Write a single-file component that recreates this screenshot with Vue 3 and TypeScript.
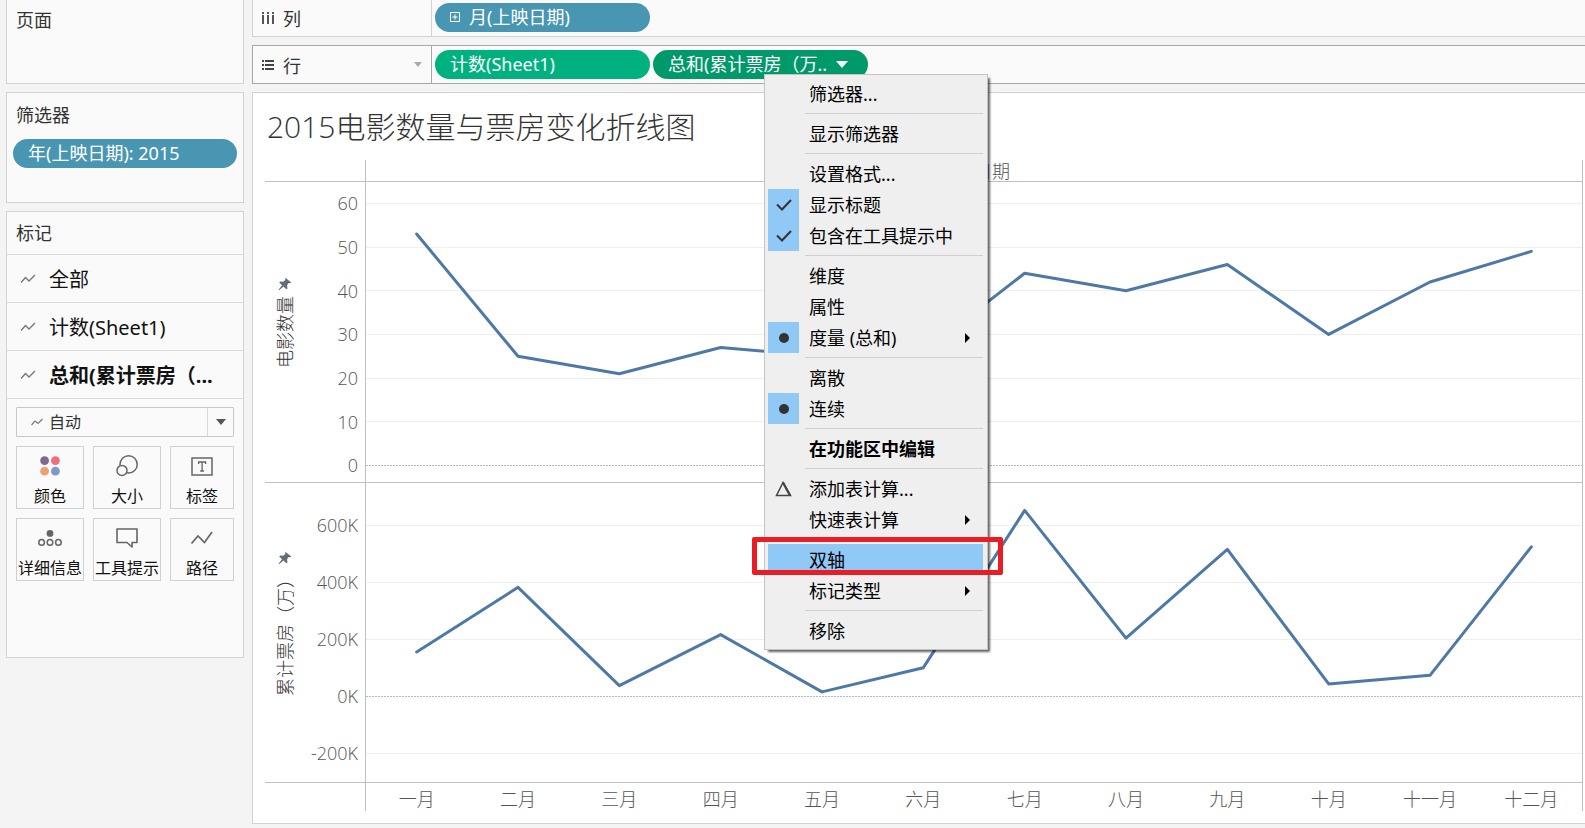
<script setup lang="ts">
interface Series {
  name: string
  min: number
  max: number
  ticks: { value: number; label: string }[]
  values: number[]
}

interface MenuEntry {
  label: string
  mark?: 'check' | 'dot' | 'delta'
  submenu?: boolean
  bold?: boolean
  active?: boolean
}

const months = ['一月', '二月', '三月', '四月', '五月', '六月', '七月', '八月', '九月', '十月', '十一月', '十二月']

const panes: Series[] = [
  {
    name: '电影数量',
    min: -3.8,
    max: 64.9,
    ticks: [60, 50, 40, 30, 20, 10, 0].map((v) => ({ value: v, label: String(v) })),
    values: [53, 25, 21, 27, 25, 26, 44, 40, 46, 30, 42, 49],
  },
  {
    name: '累计票房（万）',
    min: -300,
    max: 749,
    ticks: [600, 400, 200, 0, -200].map((v) => ({ value: v, label: `${v}K` })),
    values: [156, 383, 38, 217, 16, 101, 653, 205, 516, 44, 74, 525],
  },
]

const ratio = (p: Series, v: number) => (p.max - v) / (p.max - p.min)
const lineOf = (p: Series) =>
  p.values.map((v, i) => `${i * 100 + 50},${(ratio(p, v) * 300).toFixed(1)}`).join(' ')

const layers = [
  { label: '全部', bold: false },
  { label: '计数(Sheet1)', bold: false },
  { label: '总和(累计票房（...', bold: true },
]

const menu: MenuEntry[][] = [
  [{ label: '筛选器...' }],
  [{ label: '显示筛选器' }],
  [{ label: '设置格式...' }, { label: '显示标题', mark: 'check' }, { label: '包含在工具提示中', mark: 'check' }],
  [{ label: '维度' }, { label: '属性' }, { label: '度量 (总和)', mark: 'dot', submenu: true }],
  [{ label: '离散' }, { label: '连续', mark: 'dot' }],
  [{ label: '在功能区中编辑', bold: true }],
  [{ label: '添加表计算...', mark: 'delta' }, { label: '快速表计算', submenu: true }],
  [{ label: '双轴', active: true }, { label: '标记类型', submenu: true }],
  [{ label: '移除' }],
]
</script>

<template>
  <div class="workbook">
    <aside class="sidebar">
      <section class="card pages">
        <h2>页面</h2>
      </section>

      <section class="card filters">
        <h2>筛选器</h2>
        <button class="pill blue" type="button">年(上映日期): 2015</button>
      </section>

      <section class="card marks">
        <h2>标记</h2>
        <button v-for="l in layers" :key="l.label" class="layer" :class="{ bold: l.bold }" type="button">
          <svg width="16" height="10" viewBox="0 0 16 10" fill="none" stroke="#777" stroke-width="1.4">
            <path d="M1 8.5 5.5 3.5 9 7 15 1" />
          </svg>
          <span>{{ l.label }}</span>
        </button>

        <div class="encodings">
          <div class="mark-type">
            <svg class="type-icon" width="12" height="8" viewBox="0 0 12 8" fill="none" stroke="#777" stroke-width="1.2">
              <path d="M.5 7 4 3 7 5.5 11.5 1" />
            </svg>
            <select aria-label="标记类型">
              <option>自动</option>
            </select>
            <span class="arrow-box">
              <svg width="10" height="6" viewBox="0 0 10 6"><path d="M0 0h10L5 6z" fill="#555" /></svg>
            </span>
          </div>

          <div class="grid">
            <button type="button">
              <svg width="24" height="24" viewBox="0 0 24 24">
                <circle cx="6.6" cy="6.6" r="4.4" fill="#7b6a90" />
                <circle cx="17.4" cy="6.6" r="4.4" fill="#f56b7b" />
                <circle cx="6.6" cy="17.2" r="4.4" fill="#f0a070" />
                <circle cx="17.4" cy="17.2" r="4.4" fill="#7a9cc6" />
              </svg>
              颜色
            </button>
            <button type="button">
              <svg width="24" height="24" viewBox="0 0 24 24" fill="none" stroke="#666" stroke-width="1.5">
                <circle cx="13.6" cy="10.4" r="8.6" />
                <circle cx="7" cy="16.4" r="5" fill="#fafafa" />
              </svg>
              大小
            </button>
            <button type="button">
              <svg width="24" height="24" viewBox="0 0 24 24" fill="none" stroke="#666" stroke-width="1.5">
                <rect x="2" y="4" width="20" height="17" />
                <path d="M8.6 10V8h7v2M12.1 8v9M10.2 17H14" stroke-width="1.3" />
              </svg>
              标签
            </button>
            <button type="button">
              <svg width="24" height="24" viewBox="0 0 24 24" fill="none" stroke="#666" stroke-width="1.5">
                <circle cx="12" cy="7.4" r="3.4" fill="#666" stroke="none" />
                <circle cx="3.6" cy="16.4" r="2.8" />
                <circle cx="12" cy="16.4" r="2.8" />
                <circle cx="20.4" cy="16.4" r="2.8" />
              </svg>
              详细信息
            </button>
            <button type="button">
              <svg width="24" height="24" viewBox="0 0 24 24" fill="none" stroke="#666" stroke-width="1.6" stroke-linejoin="round">
                <path d="M2 3h20v13.5h-5V21l-5-4.500H2z" />
              </svg>
              工具提示
            </button>
            <button type="button">
              <svg width="24" height="24" viewBox="0 0 24 24" fill="none" stroke="#666" stroke-width="1.7">
                <path d="M1.500 17.500 8 10l6.500 6.500L22 6" />
              </svg>
              路径
            </button>
          </div>
        </div>
      </section>
    </aside>

    <main class="stage">
      <div class="shelf columns">
        <div class="shelf-name">
          <svg width="14" height="14" viewBox="0 0 14 14" fill="#555">
            <path d="M1 1h2v2H1zM1 4h2v9H1zM6 1h2v2H6zM6 4h2v9H6zM11 1h2v2h-2zM11 4h2v9h-2z" />
          </svg>
          <span>列</span>
        </div>
        <div class="pills">
          <button class="pill blue" type="button">
            <svg width="10" height="10" viewBox="0 0 10 10" fill="none" stroke="#fff">
              <path d="M.5.5h9v9h-9zM5 2.500v5M2.500 5h5" />
            </svg>
            月(上映日期)
          </button>
        </div>
      </div>

      <div class="shelf rows">
        <div class="shelf-name">
          <svg width="14" height="14" viewBox="0 0 14 14" fill="#444">
            <path d="M1 2h2v2H1zM4 2h9v2H4zM1 6h2v2H1zM4 6h9v2H4zM1 10h2v2H1zM4 10h9v2H4z" />
          </svg>
          <span>行</span>
          <svg class="shelf-caret" width="8" height="5" viewBox="0 0 8 5"><path d="M0 0h8L4 5z" fill="#aaa" /></svg>
        </div>
        <div class="pills">
          <button class="pill green" type="button">计数(Sheet1)</button>
          <div class="pill-host">
            <button class="pill deep" type="button" aria-haspopup="menu" aria-expanded="true">
              总和(累计票房（万..
              <svg width="12" height="7" viewBox="0 0 12 7"><path d="M0 0h12L6 7z" fill="#fff" /></svg>
            </button>

            <div class="menu" role="menu">
              <div v-for="(group, g) in menu" :key="g" class="group">
                <button
                  v-for="item in group"
                  :key="item.label"
                  class="item"
                  :class="{ bold: item.bold, active: item.active }"
                  role="menuitem"
                  type="button"
                >
                  <span class="gutter" :class="{ on: item.mark === 'check' || item.mark === 'dot' }">
                    <svg v-if="item.mark === 'check'" width="16" height="12" viewBox="0 0 16 12" fill="none" stroke="#333" stroke-width="2">
                      <path d="M1 5.500 6 10.500 15 1" />
                    </svg>
                    <svg v-else-if="item.mark === 'dot'" width="10" height="10" viewBox="0 0 10 10">
                      <circle cx="5" cy="5" r="5" fill="#333" />
                    </svg>
                    <svg v-else-if="item.mark === 'delta'" width="18" height="16" viewBox="0 0 18 16" fill="none">
                      <path d="M8 1.500 1.500 14.500h14z" stroke="#444" stroke-width="1.500" />
                      <path d="M8 1.500 15 14.500" stroke="#444" stroke-width="2.200" />
                    </svg>
                  </span>
                  <span class="text">{{ item.label }}</span>
                  <svg v-if="item.submenu" class="sub" width="5" height="10" viewBox="0 0 5 10"><path d="M0 0 5 5 0 10z" /></svg>
                  <span v-if="item.active" class="callout"></span>
                </button>
              </div>
            </div>
          </div>
        </div>
      </div>

      <section class="view">
        <h1>2015电影数量与票房变化折线图</h1>
        <div class="chart">
          <div class="corner"></div>
          <div class="field">上映日期</div>

          <template v-for="p in panes" :key="p.name">
            <div class="axis">
              <div class="axis-title">
                <svg width="14" height="14" viewBox="0 0 14 14" fill="#646c78">
                  <path d="M7.300.8 13.300 5.600 12.200 6.300 10.600 6 9 8.600 9.500 11.600 8.300 12.200 5.500 9.600 1 13.200.6 12.800 4 8.200 1.200 5.600 2.200 4.600 5.200 4.800 7.300 3z" />
                </svg>
                <span>{{ p.name }}</span>
              </div>
              <div class="scale">
                <span v-for="t in p.ticks" :key="t.value" :style="{ top: ratio(p, t.value) * 100 + '%' }">{{ t.label }}</span>
              </div>
            </div>
            <div class="plot">
              <svg viewBox="0 0 1200 300" preserveAspectRatio="none">
                <line
                  v-for="t in p.ticks"
                  :key="t.value"
                  :class="t.value === 0 ? 'zero' : 'rule'"
                  x1="0"
                  x2="1200"
                  :y1="ratio(p, t.value) * 300"
                  :y2="ratio(p, t.value) * 300"
                />
                <polyline :points="lineOf(p)" />
              </svg>
            </div>
          </template>

          <div class="foot"></div>
          <div class="months">
            <span v-for="m in months" :key="m">{{ m }}</span>
          </div>
        </div>
      </section>
    </main>
  </div>
</template>

<style>
body {
  background: #f4f4f4;
}
</style>

<style scoped>
.workbook {
  display: flex;
  gap: 8px;
  box-sizing: border-box;
  min-height: 100vh;
  padding: 0 0 4px 6px;
  overflow: hidden;
  background: #f4f4f4;
  color: #333;
  font-family: "Noto Sans", "Noto Sans CJK SC", sans-serif;
  font-size: 18px;
}
.workbook * {
  box-sizing: border-box;
}
button,
select {
  margin: 0;
  padding: 0;
  border: 0;
  background: none;
  color: inherit;
  font: inherit;
  text-align: left;
}
svg {
  display: block;
  flex: none;
}

.sidebar {
  display: flex;
  flex: none;
  flex-direction: column;
  gap: 8px;
  width: 238px;
}
.card {
  border: 1px solid #d2d2d2;
  background: #fafafa;
}
.card h2 {
  margin: 0;
  padding-left: 9px;
  font-size: 18px;
  font-weight: 400;
  line-height: 42px;
}
.pages {
  height: 84px;
  border-top: 0;
}
.pages h2 {
  line-height: 40px;
}
.filters {
  height: 111px;
}
.filters h2 {
  padding-bottom: 2px;
  line-height: 44px;
}
.filters .pill {
  width: 224px;
  margin: 0 6px;
}
.marks {
  height: 447px;
}
.layer {
  display: flex;
  align-items: center;
  gap: 13px;
  width: 100%;
  height: 48px;
  padding: 0 0 0 13px;
  border-top: 1px solid #dadada;
  color: #111;
  font-size: 20px;
  white-space: nowrap;
}
.layer.bold {
  font-weight: 700;
}
.encodings {
  padding: 8px 9px;
  border-top: 1px solid #dadada;
}
.mark-type {
  position: relative;
  margin-bottom: 9px;
}
.mark-type select {
  display: block;
  width: 100%;
  height: 30px;
  padding-left: 32px;
  border: 1px solid #c8c8c8;
  border-radius: 1px;
  appearance: none;
  font-size: 16px;
}
.type-icon {
  position: absolute;
  top: 11px;
  left: 15px;
}
.arrow-box {
  position: absolute;
  top: 1px;
  right: 1px;
  bottom: 1px;
  display: flex;
  align-items: center;
  justify-content: center;
  width: 26px;
  border-left: 1px solid #d8d8d8;
  pointer-events: none;
}
.grid {
  display: grid;
  grid-template-columns: 17fr 17fr 16fr;
  gap: 9px;
}
.grid button {
  display: flex;
  flex-direction: column;
  align-items: center;
  gap: 6px;
  height: 63px;
  padding-top: 7px;
  border: 1px solid #d0d0d0;
  color: #111;
  font-size: 16px;
  line-height: 24px;
  white-space: nowrap;
}

.pill {
  display: flex;
  align-items: center;
  gap: 9px;
  width: 215px;
  height: 29px;
  padding: 0 15px;
  border-radius: 15px;
  color: #fff;
  line-height: 29px;
  white-space: nowrap;
}
.blue {
  background: #4996b2;
}
.green {
  background: #00b180;
}
.deep {
  background: #00996a;
}

.stage {
  display: flex;
  flex: 1;
  flex-direction: column;
  gap: 8px;
  min-width: 0;
}
.shelf {
  display: flex;
  flex: none;
  border: 1px solid #d2d2d2;
  border-right: 0;
  background: #fafafa;
}
.columns {
  height: 37px;
  border-top: 0;
}
.columns .pills {
  padding-bottom: 2px;
}
.rows {
  height: 39px;
  border-color: #a8a8a8;
}
.shelf-name {
  display: flex;
  align-items: center;
  gap: 8px;
  width: 179px;
  padding: 0 9px 0 8px;
  border-right: 1px solid #d2d2d2;
}
.rows .shelf-name {
  border-color: #a8a8a8;
}
.shelf-caret {
  margin-left: auto;
}
.pills {
  display: flex;
  align-items: center;
  gap: 3px;
  padding-left: 3px;
}
.pill-host {
  position: relative;
}

.menu {
  position: absolute;
  z-index: 2;
  top: 24px;
  left: 111px;
  width: 224px;
  padding: 3px 4px 3px 3px;
  border: 1px solid #c4c4c4;
  background: #efefef;
  box-shadow: 3px 3px 2px -1px rgba(0, 0, 0, 0.6);
  color: #000;
}
.group + .group::before {
  display: block;
  height: 1px;
  margin: 4px 0 4px 37px;
  background: #d0d0d0;
  content: "";
}
.item {
  position: relative;
  display: flex;
  align-items: center;
  width: 100%;
  height: 31px;
  padding-right: 13px;
  line-height: 31px;
  white-space: nowrap;
}
.item .text {
  padding-top: 2px;
}
.item.bold {
  font-weight: 700;
}
.item.active {
  background: #90c8f6;
}
.gutter {
  display: flex;
  align-items: center;
  justify-content: center;
  width: 31px;
  height: 31px;
  margin-right: 10px;
}
.gutter.on {
  background: #90c8f6;
}
.sub {
  margin-left: auto;
}
.callout {
  position: absolute;
  top: -7px;
  right: -20px;
  bottom: 0;
  left: -16px;
  border: 5px solid #ea1c24;
  border-radius: 2px;
}

.view {
  display: flex;
  flex: 1;
  flex-direction: column;
  padding: 0 2px 12px 12px;
  border: 1px solid #d2d2d2;
  border-right: 0;
  background: #fff;
  font-family: "Open Sans", "Noto Sans CJK SC", sans-serif;
  font-weight: 300;
}
h1 {
  margin: 0;
  padding: 1px 0 0 2px;
  font-size: 30px;
  font-weight: 300;
  line-height: 66px;
}
.chart {
  display: grid;
  flex: 1;
  grid-template-rows: 22px minmax(240px, 301fr) minmax(240px, 300fr) 28px;
  grid-template-columns: 100px 1fr;
  color: #555;
}
.corner,
.field,
.axis,
.plot {
  border-bottom: 1px solid #c0c0c0;
}
.field,
.plot,
.months {
  border-right: 1px solid #c0c0c0;
  border-left: 1px solid #c0c0c0;
}
.field {
  line-height: 22px;
  text-align: center;
}
.axis {
  display: flex;
}
.axis-title {
  display: grid;
  grid-template-rows: 1fr auto 1fr;
  justify-items: center;
  width: 40px;
  color: #333;
  line-height: 20px;
}
.axis-title svg {
  align-self: end;
  margin-bottom: 5px;
}
.axis-title span {
  text-orientation: sideways;
  transform: rotate(180deg);
  white-space: nowrap;
  writing-mode: vertical-rl;
}
.scale {
  position: relative;
  flex: 1;
}
.scale span {
  position: absolute;
  right: 7px;
  line-height: 24px;
  transform: translateY(-50%);
}
.plot {
  position: relative;
}
.plot svg {
  position: absolute;
  inset: 0;
  width: 100%;
  height: 100%;
}
.plot line,
.plot polyline {
  fill: none;
  vector-effect: non-scaling-stroke;
}
.rule {
  stroke: #efefef;
  shape-rendering: crispEdges;
}
.zero {
  stroke: #b8b8b8;
  stroke-dasharray: 2 1;
  shape-rendering: crispEdges;
}
.plot polyline {
  stroke: #4e79a7;
  stroke-linecap: round;
  stroke-linejoin: round;
  stroke-width: 3px;
}
.months {
  display: grid;
  grid-template-columns: repeat(12, 1fr);
  line-height: 32px;
  text-align: center;
}
</style>
